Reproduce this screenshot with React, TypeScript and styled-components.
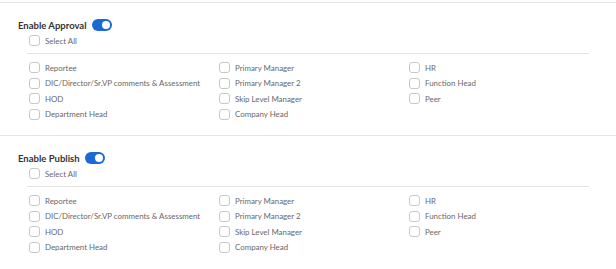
import React from 'react';
import styled, { createGlobalStyle } from 'styled-components';

const GlobalStyle = createGlobalStyle`
    body {
        margin: 0;
        background: #FFFFFF;
        font-family: Lato, "Noto Sans", Arial, sans-serif;
    }
`

const Page = styled.div`
    padding-top: 2px;
    width: 616px;
`

const Section = styled.section`
    border-top: 1px solid #E4E4E4;
    padding: 16px 0 13px 18px;
`

const Header = styled.div`
    display: flex;
    align-items: center;
    gap: 5px;
    height: 12px;
`

const Title = styled.h3`
    margin: 0;
    font-size: 9.5px;
    font-weight: 700;
    color: #333333;
`

const Toggle = styled.span<{ on: boolean }>`
    position: relative;
    width: 20px;
    height: 12px;
    border-radius: 6px;
    background-color: ${p => (p.on ? '#1B6AD3' : '#C9C9C9')};

    &::after {
        content: '';
        position: absolute;
        top: 2px;
        left: ${p => (p.on ? '10px' : '2px')};
        width: 8px;
        height: 8px;
        border-radius: 50%;
        background: #FFFFFF;
    }
`

const Body = styled.div`
    padding-left: 11px;
`

const Option = styled.label`
    display: flex;
    align-items: center;
    gap: 5px;
    height: 15.5px;
    font-size: 7.9px;
    color: #686868;
    white-space: nowrap;
`

const Box = styled.span`
    box-sizing: border-box;
    width: 11px;
    height: 11px;
    border: 1px solid #C8C8C8;
    border-radius: 3px;
    background: #FFFFFF;
    flex-shrink: 0;
`

const SelectRow = styled.div`
    margin-top: 2px;
`

const Divider = styled.hr`
    margin: 4px 0 0 -2px;
    width: 562px;
    border: none;
    border-top: 1px solid #E4E4E4;
`

const Grid = styled.div`
    margin-top: 6.5px;
    display: grid;
    grid-template-columns: repeat(3, 190px);
    grid-auto-rows: 15.5px;
`

const options = [
    'Reportee', 'Primary Manager', 'HR',
    'DIC/Director/Sr.VP comments & Assessment', 'Primary Manager 2', 'Function Head',
    'HOD', 'Skip Level Manager', 'Peer',
    'Department Head', 'Company Head',
]

const Block = ({ title }: { title: string }) => (
    <Section>
        <Header>
            <Title>{title}</Title>
            <Toggle on />
        </Header>
        <Body>
            <SelectRow>
                <Option><Box />Select All</Option>
            </SelectRow>
            <Divider />
            <Grid>
                {options.map(o => (
                    <Option key={o}><Box />{o}</Option>
                ))}
            </Grid>
        </Body>
    </Section>
)

const App = () => (
    <Page>
        <GlobalStyle />
        <Block title="Enable Approval" />
        <Block title="Enable Publish" />
    </Page>
)

export default App;
